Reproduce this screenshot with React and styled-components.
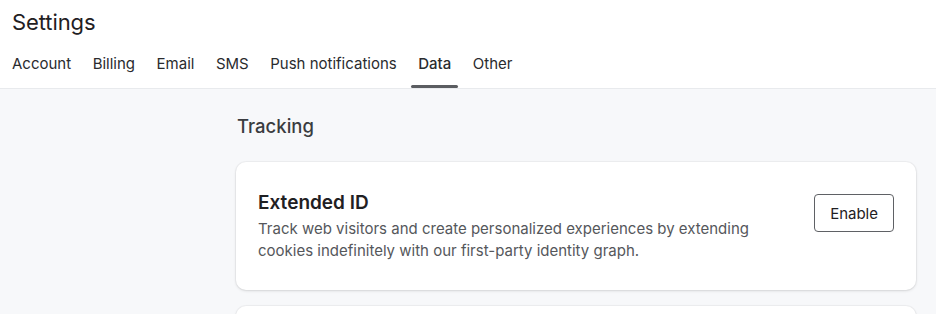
import React from "react";
import styled, { createGlobalStyle } from "styled-components";

const Global = createGlobalStyle`
  html, body { margin: 0; padding: 0; background: #f7f8fa; }
  body { font-family: Inter, "Noto Sans", sans-serif; color: #232426; -webkit-font-smoothing: antialiased; }
`;

const Page = styled.div`
  width: 936px;
  height: 314px;
  overflow: hidden;
  background: #f7f8fa;
`;

const Header = styled.header`
  background: #fff;
  border-bottom: 1px solid #e8eaed;
  padding: 8px 0 0 0;
`;

const Title = styled.h1`
  margin: 0 0 0 12px;
  font-size: 22px;
  font-weight: 400;
  line-height: 28px;
  color: #1f2023;
  letter-spacing: -0.1px;
`;

const Tabs = styled.nav`
  display: flex;
  gap: 7.5px;
  margin-top: 16px;
  padding-left: 5px;
`;

const Tab = styled.div`
  position: relative;
  padding: 0 7px;
  height: 36px;
  line-height: 24px;
  font-size: 15px;
  color: #2a2b2e;
  font-weight: ${(p) => (p.$active ? 500 : 400)};
  &::after {
    content: "";
    display: ${(p) => (p.$active ? "block" : "none")};
    position: absolute;
    left: 0;
    right: 0;
    bottom: 0;
    height: 3px;
    border-radius: 2px;
    background: #5b5d61;
  }
`;

const Main = styled.main`
  padding: 25px 20px 0 236px;
`;

const SectionTitle = styled.h2`
  margin: 0 0 24px 1px;
  font-size: 18.5px;
  font-weight: 500;
  line-height: 24px;
  color: #3a3c40;
`;

const Card = styled.section`
  background: #fff;
  border-radius: 10px;
  box-shadow: 0 1px 3px rgba(0, 0, 0, 0.12), 0 0 0 1px rgba(0, 0, 0, 0.03);
  display: flex;
  align-items: center;
  justify-content: space-between;
  padding: 29px 22px 28px 22px;
  margin-bottom: 16px;
  min-height: ${(p) => p.$minHeight || 0}px;
`;

const CardText = styled.div`
  max-width: 510px;
`;

const CardTitle = styled.h3`
  margin: 0 0 3px 0;
  font-size: 19px;
  font-weight: 600;
  line-height: 24px;
  color: #1f2023;
`;

const CardDesc = styled.p`
  margin: 0;
  font-size: 15px;
  line-height: 22px;
  color: #55575b;
`;

const Button = styled.button`
  font-family: inherit;
  font-size: 15px;
  color: #1f2023;
  background: #fff;
  border: 1px solid #5f6165;
  border-radius: 4px;
  height: 38px;
  padding: 0 15px;
  cursor: pointer;
  margin-top: -27px;
`;

const tabs = ["Account", "Billing", "Email", "SMS", "Push notifications", "Data", "Other"];

export default function App() {
  return (
    <Page>
      <Global />
      <Header>
        <Title>Settings</Title>
        <Tabs>
          {tabs.map((t) => (
            <Tab key={t} $active={t === "Data"}>{t}</Tab>
          ))}
        </Tabs>
      </Header>
      <Main>
        <SectionTitle>Tracking</SectionTitle>
        <Card>
          <CardText>
            <CardTitle>Extended ID</CardTitle>
            <CardDesc>
              Track web visitors and create personalized experiences by extending cookies
              indefinitely with our first-party identity graph.
            </CardDesc>
          </CardText>
          <Button>Enable</Button>
        </Card>
        <Card $minHeight={60} />
      </Main>
    </Page>
  );
}
